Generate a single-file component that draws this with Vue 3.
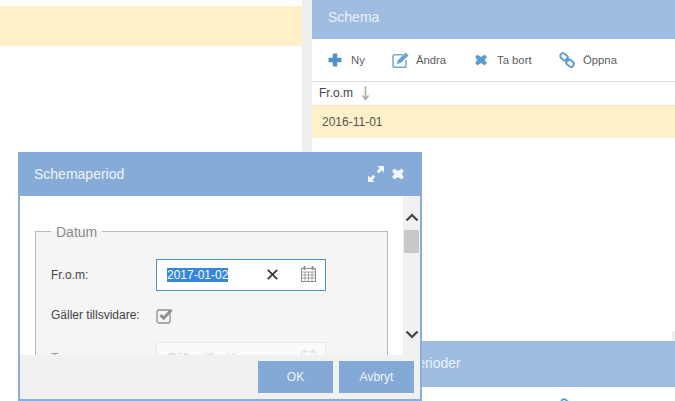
<template>
  <div class="page">
    <!-- Left list -->
    <section class="left">
      <div class="left-row"></div>
    </section>
    <div class="gutter"></div>

    <!-- Right column -->
    <section class="right">
      <div class="panel-head">Schema</div>
      <div class="toolbar">
        <button class="tool tool-ny" type="button">
          <svg width="14" height="14" viewBox="0 0 14 14"><path d="M4.800 0.500h4.400v4.300h4.300v4.400H9.200v4.300H4.800V9.200H.5V4.800h4.300z" fill="#4f92c9" /></svg>
          <span>Ny</span>
        </button>
        <button class="tool tool-andra" type="button">
          <svg width="17" height="16" viewBox="0 0 17 16">
            <path d="M11 2.800H2.800A1.800 1.800 0 0 0 1 4.600v8.800a1.800 1.800 0 0 0 1.800 1.800h9.400a1.800 1.800 0 0 0 1.800-1.800V8" fill="none" stroke="#74a8d6" stroke-width="1.500" />
            <path d="M4.800 12l1-3.800L13.600.5l3 2.900-7.800 7.700z" fill="#6da3d3" />
          </svg>
          <span>Ändra</span>
        </button>
        <button class="tool tool-bort" type="button">
          <svg width="12" height="12" viewBox="0 0 12 12"><path d="M2.500 1.500 6 3.800l3.500-2.300 1.500 1.500L8.700 6 11 9l-1.500 1.500L6 8.200l-3.500 2.300L1 9l2.300-3L1 3z" fill="#5b9bd1" stroke="#5b9bd1" stroke-width="1.400" stroke-linejoin="round" /></svg>
          <span>Ta bort</span>
        </button>
        <button class="tool tool-oppna" type="button">
          <svg width="16" height="16" viewBox="0 0 16 16" fill="none" stroke="#5b9bd1" stroke-width="1.900">
            <rect x="1" y="2" width="8" height="5.600" rx="2.800" transform="rotate(40 5 4.800)" />
            <rect x="7" y="8.400" width="8" height="5.600" rx="2.800" transform="rotate(40 11 11.200)" />
            <path d="M6.500 6.500l3 3" />
          </svg>
          <span>Öppna</span>
        </button>
      </div>
      <div class="table-head">
        <span>Fr.o.m</span>
        <svg width="9" height="16" viewBox="0 0 9 16"><path d="M4.500 1v12M1.500 10.500l3 4 3-4" fill="none" stroke="#a9a9a9" stroke-width="1.500" /></svg>
      </div>
      <div class="table-row">2016-11-01</div>
      <div class="spacer"><div class="scroll-bit"></div></div>
      <div class="panel-head panel-head-low">Schemaperioder</div>
      <div class="low-body">
        <button class="tool tool-oppna" type="button">
          <svg width="16" height="16" viewBox="0 0 16 16" fill="none" stroke="#5b9bd1" stroke-width="1.900">
            <rect x="1" y="2" width="8" height="5.600" rx="2.800" transform="rotate(40 5 4.800)" />
            <rect x="7" y="8.400" width="8" height="5.600" rx="2.800" transform="rotate(40 11 11.200)" />
            <path d="M6.500 6.500l3 3" />
          </svg>
          <span>Öppna</span>
        </button>
      </div>
    </section>

    <!-- Dialog -->
    <div class="dialog">
      <header class="dialog-head">
        <span>Schemaperiod</span>
        <div class="dialog-icons">
          <svg width="16" height="16" viewBox="0 0 16 16" fill="#f3f7fc">
            <path d="M9.500 0H16V6.500L13.800 4.300 10.800 7.300 8.700 5.200 11.700 2.200z" />
            <path d="M6.500 16H0V9.500L2.200 11.700 5.200 8.700 7.300 10.800 4.300 13.800z" />
          </svg>
          <svg width="12" height="12" viewBox="0 0 12 12"><path d="M2.500 1.500 6 3.800l3.500-2.300 1.500 1.500L8.700 6 11 9l-1.500 1.500L6 8.200l-3.500 2.300L1 9l2.300-3L1 3z" fill="#f3f7fc" stroke="#f3f7fc" stroke-width="1.400" stroke-linejoin="round" /></svg>
        </div>
      </header>
      <div class="dialog-body">
        <div class="dialog-content">
          <fieldset class="group">
            <legend>Datum</legend>
            <div class="field">
              <label>Fr.o.m:</label>
              <div class="input focus">
                <span class="selected">2017-01-02</span>
                <svg class="clear" width="11" height="11" viewBox="0 0 11 11"><path d="M.8.800l9.400 9.400M10.200.800.800 10.200" stroke="#333" stroke-width="1.700" fill="none" /></svg>
                <svg class="cal" width="15" height="16" viewBox="0 0 15 16" fill="none" stroke="#8f8f8f"><rect x=".5" y="2.500" width="14" height="13" /><path d="M.5 6h14M.5 9h14M.5 12h14M4 6v9.500M7.500 6v9.500M11 6v9.500" stroke-width=".8" /><path d="M3.500 0v4M11.500 0v4" stroke-width="2" /></svg>
              </div>
            </div>
            <div class="field field-check">
              <label>Gäller tillsvidare:</label>
              <svg width="18" height="17" viewBox="0 0 18 17" fill="none">
                <rect x="1" y="3" width="13" height="13" rx="2" stroke="#8e8e8e" stroke-width="1.300" />
                <path d="M4.500 8l3.200 3.200L15.500 2.800" stroke="#8e8e8e" stroke-width="3" />
              </svg>
            </div>
            <div class="field field-dim">
              <label>T.o.m:</label>
              <div class="input dim">
                <span>Gäller tillsvidare</span>
                <svg class="cal" width="15" height="16" viewBox="0 0 15 16" fill="none" stroke="#d8d8d8"><rect x=".5" y="2.500" width="14" height="13" /><path d="M3.500 0v4M11.500 0v4" stroke-width="2" /></svg>
              </div>
            </div>
          </fieldset>
        </div>
        <div class="scroll">
          <svg width="14" height="9" viewBox="0 0 14 9"><path d="M1.500 7.500 7 2l5.500 5.500" fill="none" stroke="#444" stroke-width="2.200" /></svg>
          <div class="thumb"></div>
          <svg class="down" width="14" height="9" viewBox="0 0 14 9"><path d="M1.500 1.500 7 7l5.500-5.500" fill="none" stroke="#444" stroke-width="2.200" /></svg>
        </div>
      </div>
      <footer class="dialog-foot">
        <button class="btn" type="button">OK</button>
        <button class="btn" type="button">Avbryt</button>
      </footer>
    </div>
  </div>
</template>

<script setup>
</script>

<style>
html, body {
  margin: 0;
  background: #fff;
}
</style>

<style scoped>
.page {
  position: relative;
  display: flex;
  width: 675px;
  height: 401px;
  overflow: hidden;
  font-family: "Liberation Sans", Arial, sans-serif;
  background: #fff;
}

.left {
  width: 302px;
  padding-top: 6px;
  box-sizing: border-box;
}

.left-row {
  height: 40px;
  background: #fff0c9;
}

.gutter {
  width: 10px;
  background: #eeeeee;
}

.right {
  flex: 1;
  display: flex;
  flex-direction: column;
  min-width: 0;
}

.panel-head {
  height: 39px;
  padding-left: 16px;
  background: #9fbde0;
  color: #eaf1f9;
  font-size: 14px;
  line-height: 35px;
  flex: none;
}

.panel-head-low {
  height: 46px;
  line-height: 44px;
  padding-left: 46px;
}

.toolbar {
  display: flex;
  align-items: center;
  height: 42px;
  padding-left: 16px;
  border-bottom: 1px solid #dcdcdc;
  flex: none;
}

.tool {
  display: flex;
  align-items: center;
  padding: 0;
  border: 0;
  background: none;
  font: inherit;
  font-size: 11.300px;
  color: #5c5c5c;
}

.tool-ny { width: 64px; gap: 9px; }
.tool-andra { width: 83px; gap: 7px; }
.tool-bort { width: 84px; gap: 10px; }
.tool-oppna { gap: 8px; }

.table-head {
  display: flex;
  align-items: center;
  gap: 8px;
  height: 21px;
  padding: 0 0 2px 7px;
  font-size: 12px;
  color: #444;
  flex: none;
}

.table-row {
  height: 31px;
  padding-left: 10px;
  line-height: 32px;
  background: #fff0c9;
  border-top: 1px solid #eee3c4;
  border-bottom: 1px solid #f5eed9;
  font-size: 12px;
  color: #555;
  flex: none;
}

.spacer {
  display: flex;
  align-items: flex-end;
  justify-content: flex-end;
  height: 203px;
  flex: none;
}

.scroll-bit {
  width: 3px;
  height: 10px;
  background: #eeeeee;
}

.low-body {
  flex: 1;
  padding: 11px 0 0 248px;
}

.dialog {
  position: absolute;
  left: 18px;
  top: 152px;
  width: 404px;
  height: 249px;
  box-sizing: border-box;
  display: flex;
  flex-direction: column;
  border: 2px solid #8aaedb;
  border-top: 0;
  background: #fff;
}

.dialog-head {
  display: flex;
  align-items: center;
  justify-content: space-between;
  height: 44px;
  padding: 0 18px 0 16px;
  margin: 0 -2px;
  background: #87abd8;
  color: #eef3fa;
  font-size: 14px;
  flex: none;
}

.dialog-icons {
  display: flex;
  align-items: center;
  gap: 8px;
}

.dialog-body {
  display: flex;
  height: 159px;
  overflow: hidden;
  flex: none;
}

.dialog-content {
  flex: 1;
  padding: 27px 15px 0;
  min-width: 0;
}

.group {
  margin: 0;
  padding: 19px 0 40px 15px;
  border: 1px solid #b9b9b9;
  background: #f5f5f5;
}

.group legend {
  margin-left: 0;
  padding: 1px 5px 0;
  font-size: 14px;
  color: #8a8a8a;
}

.field {
  display: flex;
  align-items: center;
  font-size: 12px;
  color: #444;
}

.field label {
  width: 105px;
  flex: none;
}

.field-check {
  margin-top: 12px;
  height: 24px;
}

.field-dim {
  margin-top: 15px;
  opacity: .5;
}

.input {
  position: relative;
  display: flex;
  align-items: center;
  box-sizing: border-box;
  width: 170px;
  height: 32px;
  padding-left: 10px;
  background: #fff;
  font-size: 12px;
}

.input.focus {
  border: 1px solid #4e93c8;
}

.input.dim {
  border: 1px solid #ddd;
  color: #aaa;
}

.selected {
  background: #3585e0;
  color: #fff;
  line-height: 14px;
}

.clear {
  position: absolute;
  left: 110px;
  top: 9px;
}

.cal {
  position: absolute;
  right: 9px;
  top: 6px;
}

.scroll {
  position: relative;
  width: 17px;
  display: flex;
  flex-direction: column;
  align-items: center;
  background: #f1f1f1;
  flex: none;
}

.scroll svg {
  margin-top: 17px;
}

.scroll svg.down {
  margin-top: 77px;
}

.thumb {
  width: 15px;
  height: 23px;
  margin-top: 8px;
  background: #c8c8c8;
}

.dialog-foot {
  display: flex;
  justify-content: flex-end;
  gap: 6px;
  height: 44px;
  padding: 6px 6px 0 0;
  box-sizing: border-box;
  background: #f1f1f1;
  flex: none;
}

.btn {
  width: 75px;
  height: 32px;
  padding: 0;
  border: 0;
  background: #85a9d6;
  color: #eef3fa;
  font: inherit;
  font-size: 12px;
}
</style>
